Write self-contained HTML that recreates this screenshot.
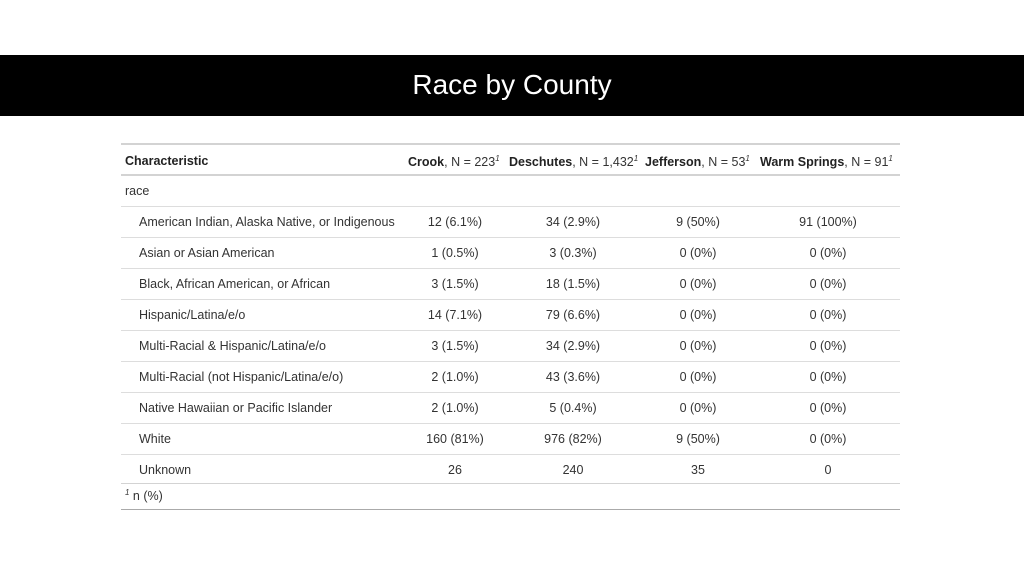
<!DOCTYPE html>
<html><head><meta charset="utf-8"><style>
body{margin:0;width:1024px;height:576px;background:#fff;position:relative;overflow:hidden;font-family:"Liberation Sans",sans-serif;color:#333}
.bar{position:absolute;left:0;top:55px;width:1024px;height:61px;background:#000;color:#fff;font-size:28px;text-align:center;line-height:60px}
.t{position:absolute;left:121px;width:779px}
.line{position:absolute;left:121px;width:779px;height:1px;background:#ddd}
.r{position:absolute;left:121px;width:779px;height:31px;font-size:12.5px}
.r span{position:absolute;top:8px;white-space:nowrap}
.c{transform:translateX(-50%)}
sup{font-size:8px;font-style:italic}
b{color:#222}
</style></head><body>
<div class="bar">Race by County</div>
<div class="line" style="top:143px;height:2px;background:#d3d3d3"></div>
<div class="r" style="top:145px"><span style="left:4px;top:9px"><b>Characteristic</b></span>
<span style="left:287px;top:9px"><b>Crook</b>, N = 223<sup>1</sup></span>
<span style="left:388px;top:9px"><b>Deschutes</b>, N = 1,432<sup>1</sup></span>
<span style="left:524px;top:9px"><b>Jefferson</b>, N = 53<sup>1</sup></span>
<span style="left:639px;top:9px"><b>Warm Springs</b>, N = 91<sup>1</sup></span></div>
<div class="line" style="top:174px;height:2px;background:#d3d3d3"></div>
<div class="r" style="top:176px"><span style="left:4px">race</span></div>
<div id="rows"></div>
<div class="line" style="top:483px;height:1px;background:#d3d3d3"></div>
<div class="r" style="top:484px"><span style="left:4px;top:4px"><sup>1</sup> n (%)</span></div>
<div class="line" style="top:509px;height:1px;background:#aaa"></div>
<script>
var d=[["American Indian, Alaska Native, or Indigenous","12 (6.1%)","34 (2.9%)","9 (50%)","91 (100%)"],
["Asian or Asian American","1 (0.5%)","3 (0.3%)","0 (0%)","0 (0%)"],
["Black, African American, or African","3 (1.5%)","18 (1.5%)","0 (0%)","0 (0%)"],
["Hispanic/Latina/e/o","14 (7.1%)","79 (6.6%)","0 (0%)","0 (0%)"],
["Multi-Racial &amp; Hispanic/Latina/e/o","3 (1.5%)","34 (2.9%)","0 (0%)","0 (0%)"],
["Multi-Racial (not Hispanic/Latina/e/o)","2 (1.0%)","43 (3.6%)","0 (0%)","0 (0%)"],
["Native Hawaiian or Pacific Islander","2 (1.0%)","5 (0.4%)","0 (0%)","0 (0%)"],
["White","160 (81%)","976 (82%)","9 (50%)","0 (0%)"],
["Unknown","26","240","35","0"]];
var cx=[334,452,577,707],h="";
d.forEach(function(r,i){var y=206+i*31;
h+='<div class="line" style="top:'+y+'px"></div><div class="r" style="top:'+(y+1)+'px"><span style="left:18px">'+r[0]+'</span>';
for(var j=0;j<4;j++)h+='<span class="c" style="left:'+cx[j]+'px">'+r[j+1]+'</span>';h+='</div>';});
document.getElementById('rows').innerHTML=h;
</script>
</body></html>
